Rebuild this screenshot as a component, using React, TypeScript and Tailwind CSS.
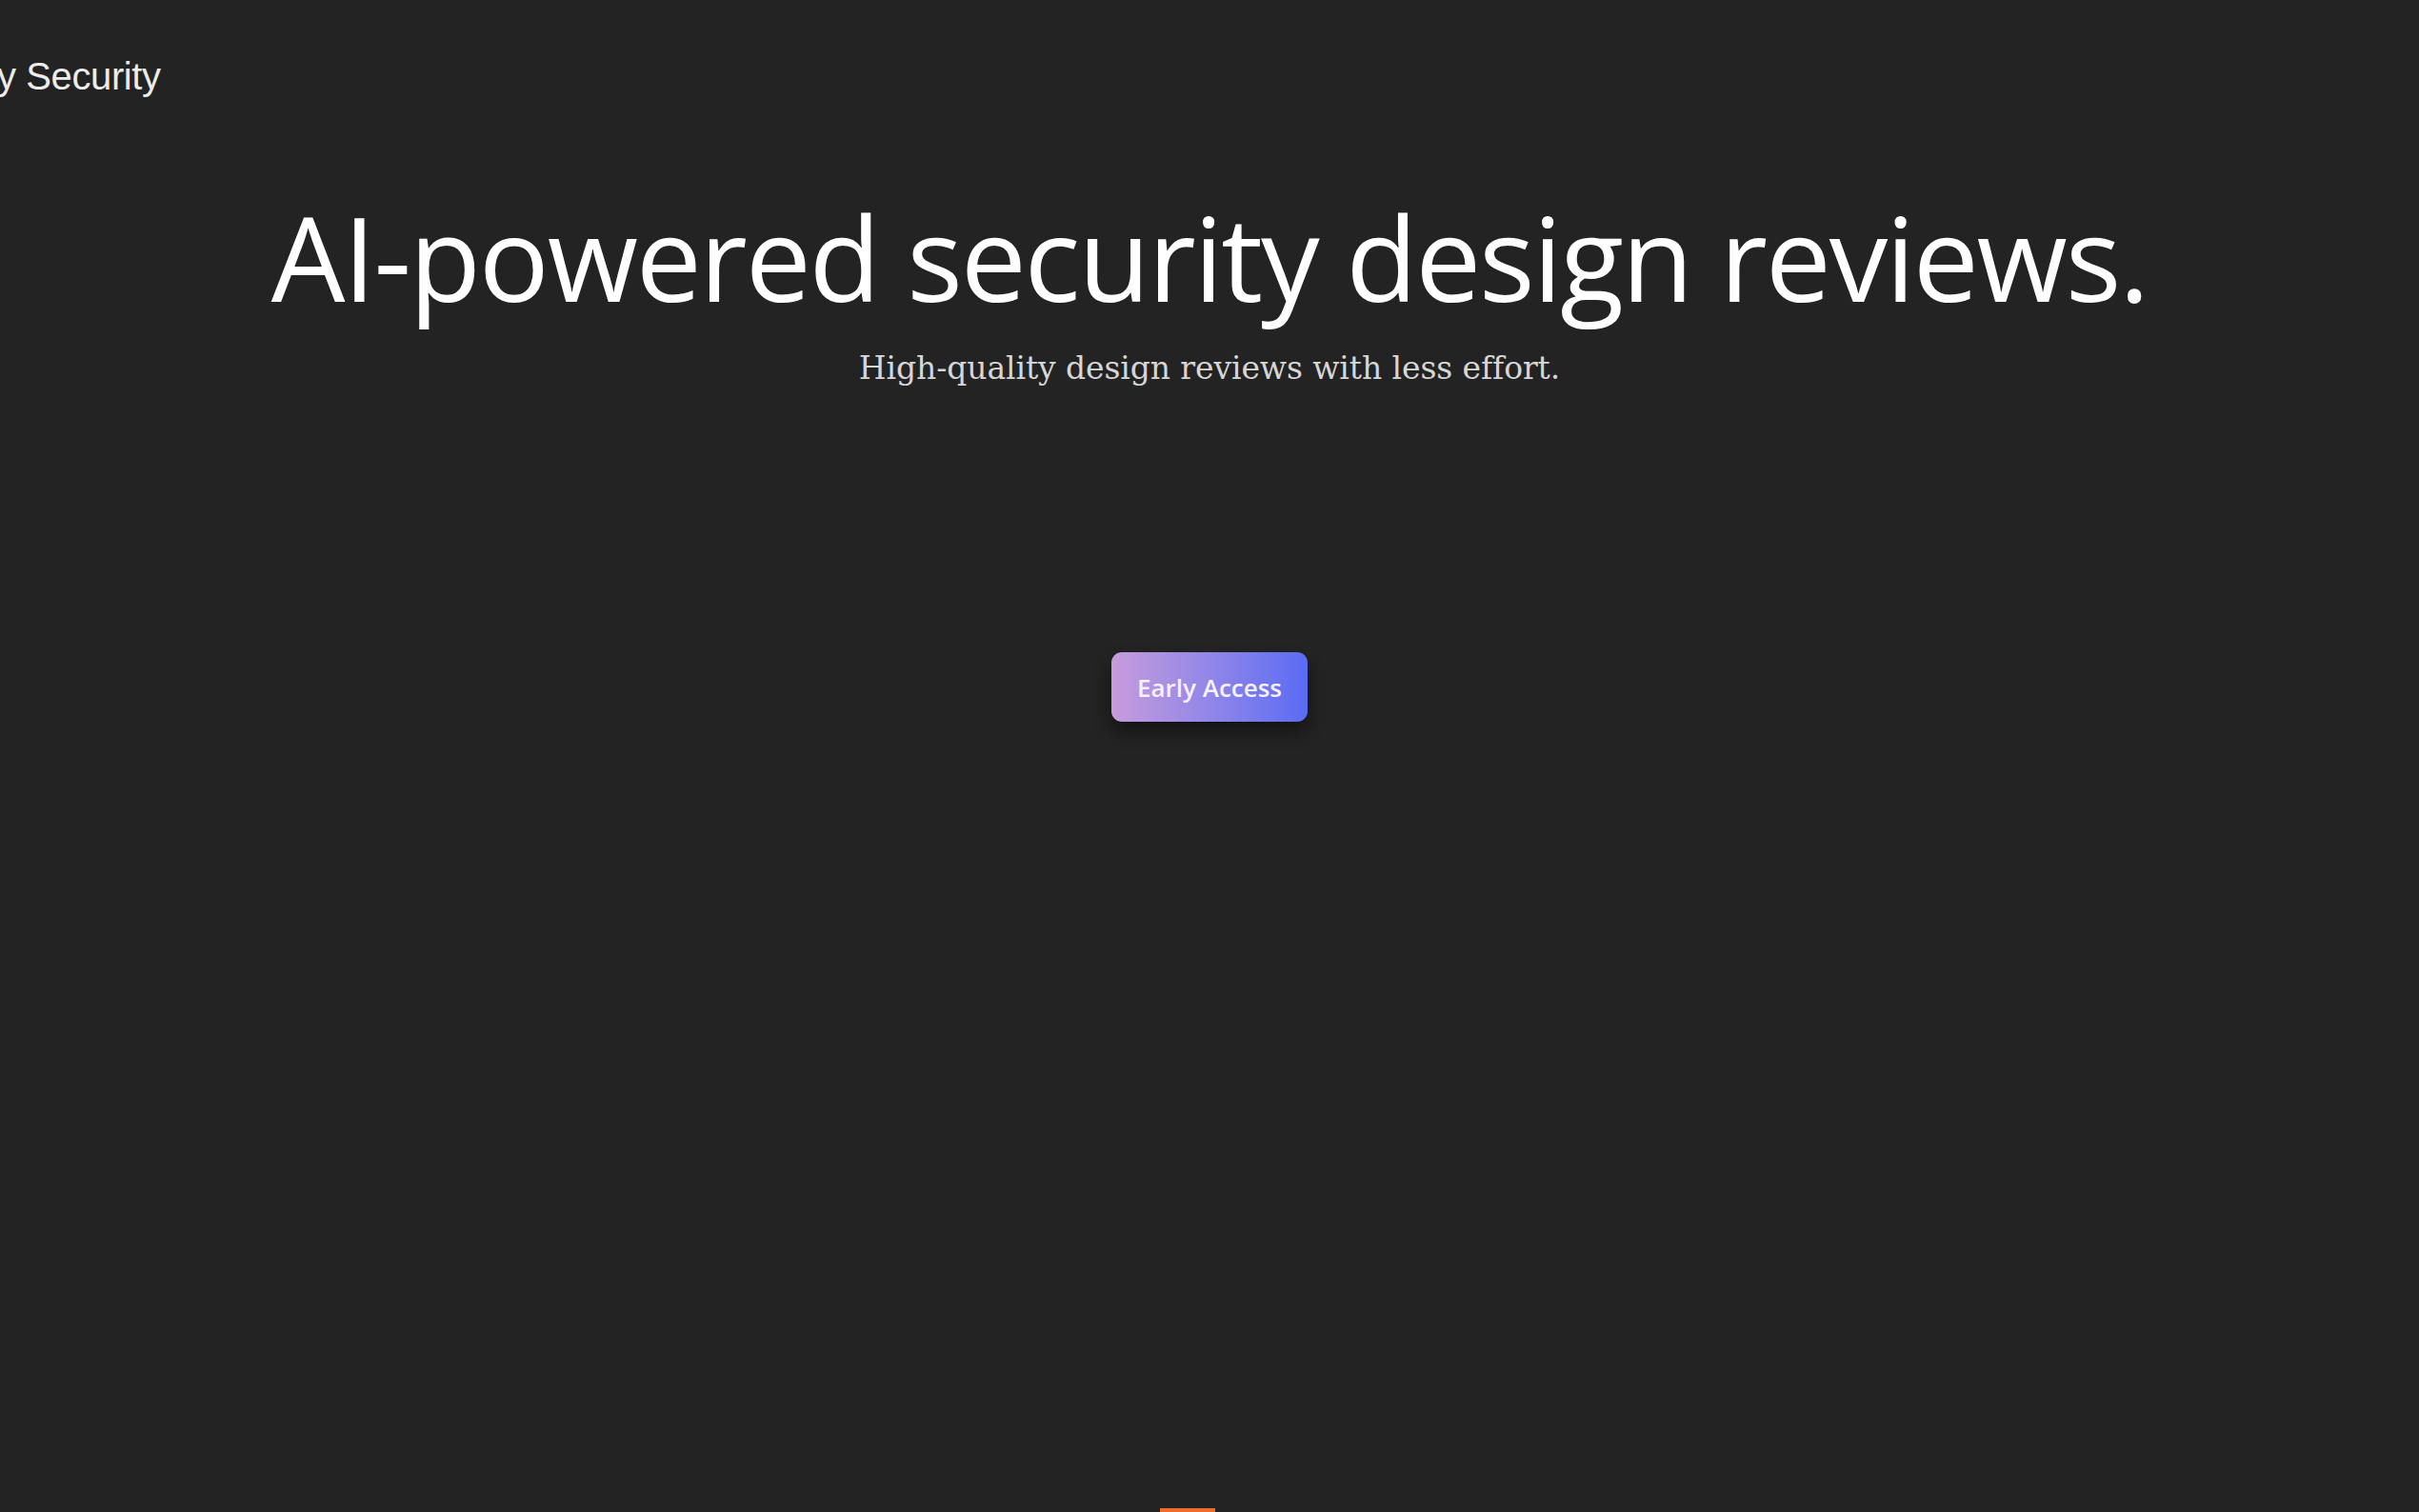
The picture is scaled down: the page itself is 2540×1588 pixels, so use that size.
import React from "react";

const App: React.FC = () => {
    return (
        <div className="min-h-screen h-[1588px] overflow-hidden bg-[#232323] flex flex-col">
            {/* brand, partly off the left edge */}
            <header className="pt-[60px]">
                <span className="block -ml-[3px] text-[40px] leading-none text-[#ececec] font-['Liberation_Sans',Arial,sans-serif] tracking-[-0.01em]">
                    y Security
                </span>
            </header>

            <main className="flex flex-col items-center">
                <h1 className="mt-[108px] text-[123px] leading-none tracking-[-0.018em] text-white font-['Open_Sans',sans-serif] font-normal whitespace-nowrap">
                    AI-powered security design reviews.
                </h1>
                <p className="mt-[39px] text-[33px] leading-none tracking-[-0.003em] text-[#d6d6d6] font-['DejaVu_Serif','Liberation_Serif',serif]">
                    High-quality design reviews with less effort.
                </p>

                <button
                    type="button"
                    className="mt-[282px] h-[73px] w-[206px] flex items-center justify-center rounded-[11px] bg-linear-to-r from-[#c89bdc] to-[#5a6bf3] text-[26px] leading-none font-semibold text-[#f6f0fb] font-['Open_Sans',sans-serif] shadow-[0_10px_18px_rgba(0,0,0,0.45)]"
                >
                    Early Access
                </button>
            </main>

            <div className="mt-auto self-center mr-[46px] h-[4px] w-[58px] bg-[#f06c2c]" />
        </div>
    );
};

export default App;
